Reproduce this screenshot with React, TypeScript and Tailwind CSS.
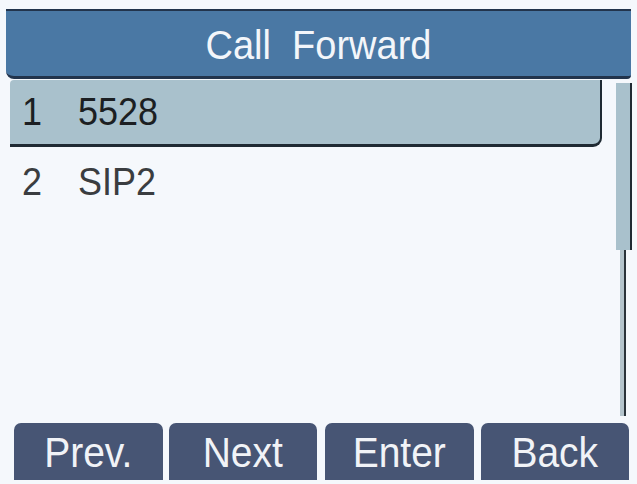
export default function App() {
  const rows = [
    { n: "1", label: "5528", selected: true },
    { n: "2", label: "SIP2", selected: false },
  ];
  const keys = ["Prev.", "Next", "Enter", "Back"];

  return (
    <div className="w-[637px] h-[484px] bg-[#f5f8fc] flex flex-col font-['Liberation_Sans',Arial,sans-serif] overflow-hidden">
      {/* Title bar */}
      <div className="mt-[9px] mx-[6px] h-[70px] shrink-0 bg-[#4a78a4] border-t-2 border-b-[3px] border-[#22344c] rounded-bl-[8px] rounded-br-[4px] flex items-center justify-center">
        <span className="inline-block text-[38px] leading-none text-[#f3f6fa] whitespace-pre scale-y-[1.08] translate-y-[1px]">Call  Forward</span>
      </div>

      {/* List + scrollbar */}
      <div className="flex flex-1 min-h-0 pl-[10px] pr-[5px]">
        <div className="flex-1 flex flex-col pt-[1px]">
          {rows.map((r) => (
            <div
              key={r.n}
              className={
                r.selected
                  ? "h-[67px] flex items-center bg-[#a9c1cc] border-b-[3px] border-r-2 border-[#1f2a33] rounded-br-[9px] rounded-tl-[4px] text-[#1c1f22]"
                  : "h-[70px] flex items-center text-[#3a3d40]"
              }
            >
              <span className="w-[68px] pl-[12px] inline-block text-[36px] leading-none scale-y-[1.08]">{r.n}</span>
              <span className="inline-block text-[36px] leading-none scale-y-[1.08]">{r.label}</span>
            </div>
          ))}
        </div>
        <div className="w-[20px] ml-[10px] flex flex-col items-end pt-[4px] pb-[7px]">
          <div className="w-[16px] h-[167px] bg-[#a9c1cc] border-r-2 border-[#1f2a33]" />
          <div className="mr-[6px] w-[6px] flex-1 bg-[#b4c4cc] border-r-2 border-[#2a333a]" />
        </div>
      </div>

      {/* Soft keys */}
      <div className="flex shrink-0 gap-[6px] pl-[14px] pr-[8px] pb-[4px]">
        {keys.map((k, i) => (
          <div
            key={k}
            className={`h-[57px] ${i === 2 ? "ml-[2px]" : ""} ${i === 3 ? "ml-[1px]" : ""} w-[149px] bg-[#475574] rounded-t-[7px] flex items-center justify-center text-[#f1f3f7]`}
          >
            <span className="inline-block text-[39px] leading-none scale-y-[1.1] translate-y-[1px]">{k}</span>
          </div>
        ))}
      </div>
    </div>
  );
}
